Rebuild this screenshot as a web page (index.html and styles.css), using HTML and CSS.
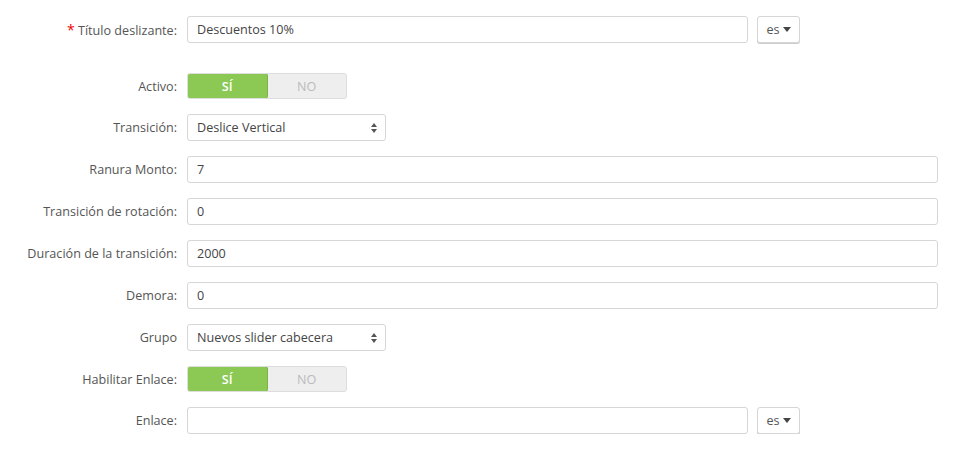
FILE: index.html
```html
<!DOCTYPE html>
<html lang="es">
<head>
<meta charset="utf-8">
<link rel="stylesheet" href="styles.css">
</head>
<body>
<form class="form">
  <div class="row first">
    <label class="lbl"><span class="req">*</span> Título deslizante:</label>
    <div class="ctrl">
      <input class="inp half" type="text" value="Descuentos 10%">
      <button type="button" class="lang">es <span class="caret"></span></button>
    </div>
  </div>
  <div class="row">
    <label class="lbl">Activo:</label>
    <div class="ctrl">
      <div class="switch"><span class="on">SÍ</span><span class="off">NO</span></div>
    </div>
  </div>
  <div class="row">
    <label class="lbl">Transición:</label>
    <div class="ctrl">
      <div class="sel"><span>Deslice Vertical</span><svg class="arr" width="6" height="10" viewBox="0 0 6 10"><path d="M3 0L6 4H0Z M3 10L0 6H6Z" fill="#555"/></svg></div>
    </div>
  </div>
  <div class="row">
    <label class="lbl">Ranura Monto:</label>
    <div class="ctrl"><input class="inp full" type="text" value="7"></div>
  </div>
  <div class="row">
    <label class="lbl">Transición de rotación:</label>
    <div class="ctrl"><input class="inp full" type="text" value="0"></div>
  </div>
  <div class="row">
    <label class="lbl">Duración de la transición:</label>
    <div class="ctrl"><input class="inp full" type="text" value="2000"></div>
  </div>
  <div class="row">
    <label class="lbl">Demora:</label>
    <div class="ctrl"><input class="inp full" type="text" value="0"></div>
  </div>
  <div class="row">
    <label class="lbl">Grupo</label>
    <div class="ctrl">
      <div class="sel"><span>Nuevos slider cabecera</span><svg class="arr" width="6" height="10" viewBox="0 0 6 10"><path d="M3 0L6 4H0Z M3 10L0 6H6Z" fill="#555"/></svg></div>
    </div>
  </div>
  <div class="row">
    <label class="lbl">Habilitar Enlace:</label>
    <div class="ctrl">
      <div class="switch"><span class="on">SÍ</span><span class="off">NO</span></div>
    </div>
  </div>
  <div class="row">
    <label class="lbl">Enlace:</label>
    <div class="ctrl">
      <input class="inp half" type="text" value="">
      <button type="button" class="lang">es <span class="caret"></span></button>
    </div>
  </div>
</form>
</body>
</html>
```
FILE: styles.css
```css
html, body {
  margin: 0;
  padding: 0;
  background: #fff;
}
body {
  font-family: "Open Sans", "Liberation Sans", sans-serif;
  font-size: 12.6px;
  color: #555;
}
.form {
  padding: 16px 16px 0 0;
  display: flex;
  flex-direction: column;
  gap: 15px;
}
.row {
  display: grid;
  grid-template-columns: 177px 1fr;
  column-gap: 10px;
  align-items: center;
}
.row.first {
  margin-bottom: 15px;
}
.lbl {
  text-align: right;
  color: #555;
  white-space: nowrap;
}
.req {
  color: #e00;
  font-size: 14px;
}
.ctrl {
  display: flex;
  align-items: center;
  gap: 9px;
}
.inp {
  box-sizing: border-box;
  height: 27px;
  border: 1px solid #d6d6d6;
  border-radius: 3px;
  padding: 0 9px;
  font-family: "Open Sans", "Liberation Sans", sans-serif;
  font-size: 12.6px;
  color: #444;
  background: #fff;
  outline: none;
}
.inp.full { width: 751px; }
.inp.half { width: 561px; }
.lang {
  box-sizing: border-box;
  height: 27px;
  width: 43px;
  border: 1px solid #d6d6d6;
  border-radius: 3px;
  background: #fff;
  box-shadow: 0 1px 0 #ccc;
  font-family: "Open Sans", "Liberation Sans", sans-serif;
  font-size: 12.6px;
  color: #555;
  padding: 0;
  display: flex;
  align-items: center;
  justify-content: center;
  gap: 3px;
}
.caret {
  width: 0;
  height: 0;
  border-left: 4px solid transparent;
  border-right: 4px solid transparent;
  border-top: 5px solid #444;
}
.switch {
  display: flex;
  width: 160px;
  height: 26px;
  box-sizing: border-box;
  border-radius: 3px;
  background: #eee;
  border: 1px solid #ddd;
  overflow: hidden;
}
.switch span {
  flex: 1;
  display: flex;
  align-items: center;
  justify-content: center;
  font-size: 12.6px;
  text-transform: uppercase;
}
.switch .on {
  background: #8bc954;
  color: #fff;
  margin: -1px 0 -1px -1px;
  border: 1px solid #7ab541;
  border-radius: 3px;
  font-weight: 600;
}
.switch .off {
  color: #bbb;
}
.sel {
  box-sizing: border-box;
  width: 199px;
  height: 27px;
  border: 1px solid #d6d6d6;
  border-radius: 3px;
  padding: 0 8px 0 9px;
  display: flex;
  align-items: center;
  justify-content: space-between;
  color: #444;
  background: #fff;
}
```
